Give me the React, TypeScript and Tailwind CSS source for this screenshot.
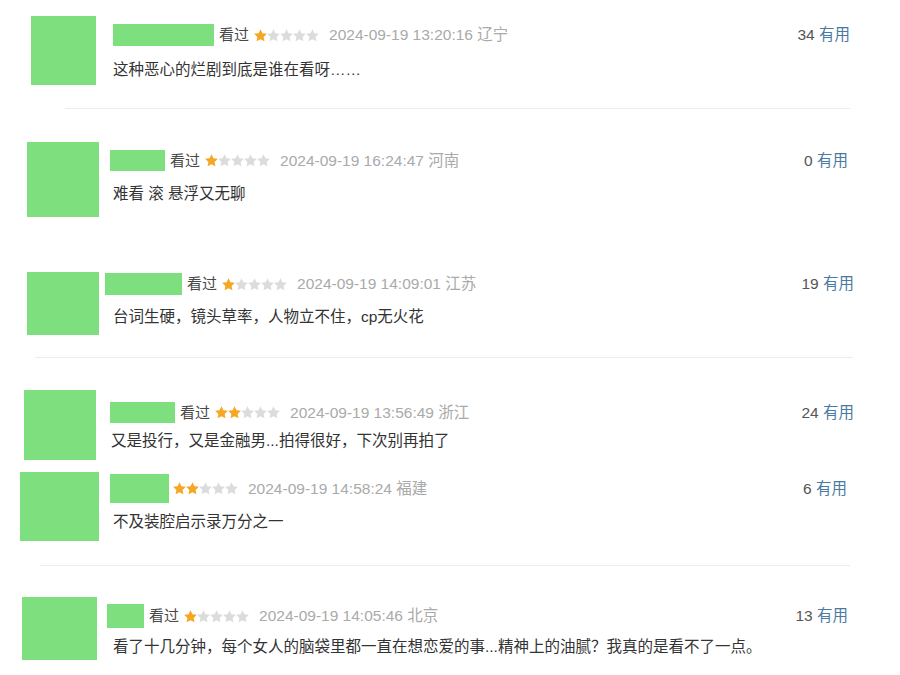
type Review = {
  pad: string
  avatar: string
  body: string
  name: string
  comment: string
  watched: boolean
  stars: number
  time: string
  place: string
  votes: number
  text: string
}

const REVIEWS: Review[] = [
  {
    pad: 'pt-[16px] pl-[31px] pr-[50px]',
    avatar: 'w-[65px] h-[69px]',
    body: 'ml-[17px] mt-[8px]',
    name: 'w-[101px] h-[22px]',
    comment: 'mt-[14px]',
    watched: true,
    stars: 1,
    time: '2024-09-19 13:20:16',
    place: '辽宁',
    votes: 34,
    text: '这种恶心的烂剧到底是谁在看呀……',
  },
  {
    pad: 'pt-[33px] pl-[27px] pr-[52px]',
    avatar: 'w-[72px] h-[75px]',
    body: 'ml-[11px] mt-[8px]',
    name: 'w-[55px] h-[21px]',
    comment: 'mt-[13px] ml-[3px]',
    watched: true,
    stars: 1,
    time: '2024-09-19 16:24:47',
    place: '河南',
    votes: 0,
    text: '难看 滚 悬浮又无聊',
  },
  {
    pad: 'pt-[55px] pl-[27px] pr-[46px]',
    avatar: 'w-[72px] h-[63px]',
    body: 'ml-[6px] mt-[1px]',
    name: 'w-[77px] h-[22px]',
    comment: 'mt-[12px] ml-[8px]',
    watched: true,
    stars: 1,
    time: '2024-09-19 14:09:01',
    place: '江苏',
    votes: 19,
    text: '台词生硬，镜头草率，人物立不住，cp无火花',
  },
  {
    pad: 'pt-[32px] pl-[24px] pr-[46px]',
    avatar: 'w-[72px] h-[70px]',
    body: 'ml-[14px] mt-[12px]',
    name: 'w-[65px] h-[21px]',
    comment: 'mt-[8px] ml-[1px]',
    watched: true,
    stars: 2,
    time: '2024-09-19 13:56:49',
    place: '浙江',
    votes: 24,
    text: '又是投行，又是金融男...拍得很好，下次别再拍了',
  },
  {
    pad: 'pt-[12px] pl-[20px] pr-[53px]',
    avatar: 'w-[79px] h-[69px]',
    body: 'ml-[11px] mt-[2px]',
    name: 'w-[59px] h-[29px]',
    comment: 'mt-[9px] ml-[3px]',
    watched: false,
    stars: 2,
    time: '2024-09-19 14:58:24',
    place: '福建',
    votes: 6,
    text: '不及装腔启示录万分之一',
  },
  {
    pad: 'pt-[31px] pl-[22px] pr-[52px]',
    avatar: 'w-[75px] h-[63px]',
    body: 'ml-[10px] mt-[7px]',
    name: 'w-[37px] h-[24px]',
    comment: 'mt-[9px] ml-[6px]',
    watched: true,
    stars: 1,
    time: '2024-09-19 14:05:46',
    place: '北京',
    votes: 13,
    text: '看了十几分钟，每个女人的脑袋里都一直在想恋爱的事...精神上的油腻？我真的是看不了一点。',
  },
]

// dividers sit after these rows
const DIVIDERS: Record<number, string> = {
  0: 'mt-[23px] ml-[65px] w-[785px]',
  2: 'mt-[22px] ml-[35px] w-[818px]',
  4: 'mt-[24px] ml-[40px] w-[810px]',
}

function Star({ on }: { on: boolean }) {
  return (
    <svg width="13" height="13" viewBox="1.5 1.5 21 21" className="shrink-0">
      <path
        d="M12 1.8l3.1 6.6 7.2.9-5.3 5 1.4 7.1L12 17.9l-6.4 3.5L7 14.3l-5.3-5 7.2-.9z"
        fill={on ? '#f5a623' : '#dcdcdc'}
      />
    </svg>
  )
}

function ReviewRow({ r }: { r: Review }) {
  return (
    <div className={`flex items-start ${r.pad}`}>
      <div className={`shrink-0 bg-[#7ddf7d] ${r.avatar}`} />
      <div className={`min-w-0 flex-1 ${r.body}`}>
        <div className="flex items-center">
          <div className={`shrink-0 bg-[#7ddf7d] ${r.name}`} />
          {r.watched && <span className="ml-[5px] text-[15px] leading-5 text-[#494949]">看过</span>}
          <span className={`flex ${r.watched ? 'ml-[5px]' : 'ml-[4px]'}`}>
            {[0, 1, 2, 3, 4].map((i) => (
              <Star key={i} on={i < r.stars} />
            ))}
          </span>
          <span className="ml-[10px] text-[15.5px] leading-5 text-[#aaaaaa]">
            {r.time} {r.place}
          </span>
          <span className="ml-auto text-[15.5px] leading-5">
            <span className="text-[#555]">{r.votes}</span> <span className="text-[#4a7aa3]">有用</span>
          </span>
        </div>
        <p className={`text-[15.5px] leading-5 text-[#333] ${r.comment}`}>{r.text}</p>
      </div>
    </div>
  )
}

export default function App() {
  return (
    <div
      className="h-[675px] w-[900px] overflow-hidden bg-white"
      style={{ fontFamily: '"Liberation Sans", "Noto Sans CJK SC", sans-serif' }}
    >
      {REVIEWS.map((r, i) => (
        <div key={i}>
          <ReviewRow r={r} />
          {DIVIDERS[i] && <div className={`h-px bg-[#ececec] ${DIVIDERS[i]}`} />}
        </div>
      ))}
    </div>
  )
}
